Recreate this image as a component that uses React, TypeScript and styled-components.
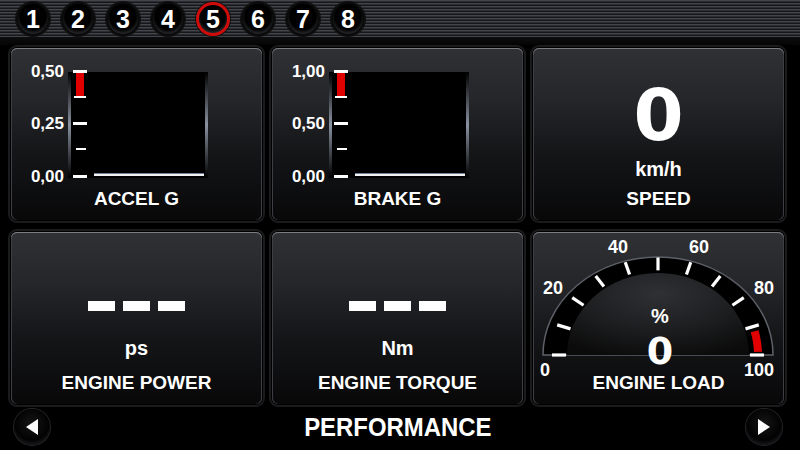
import React from "react";
import styled, { createGlobalStyle } from "styled-components";

const GlobalStyle = createGlobalStyle`
  html, body {
    margin: 0;
    padding: 0;
    background: #000;
  }
  body {
    width: 800px;
    height: 450px;
    overflow: hidden;
    font-family: "Liberation Sans", Arial, sans-serif;
    color: #fff;
  }
`;

const Screen = styled.div`
  width: 800px;
  height: 450px;
  display: flex;
  flex-direction: column;
  background: #000;
`;

const TopBar = styled.div`
  height: 45px;
  box-sizing: border-box;
  display: flex;
  align-items: flex-start;
  gap: 11px;
  padding: 2px 0 0 16px;
  background:
    linear-gradient(to bottom, transparent 0 37px, #0d0d0f 37px, #050505 45px),
    repeating-linear-gradient(to bottom, #44454b 0 1px, #2b2c31 1px 2px, #16171a 2px 3px);
`;

const PageButton = styled.div<{ $active?: boolean }>`
  width: 34px;
  height: 34px;
  box-sizing: border-box;
  border-radius: 50%;
  display: flex;
  align-items: center;
  justify-content: center;
  font-size: 25px;
  font-weight: bold;
  color: #fff;
  border: ${(p) => (p.$active ? "3px solid #d10a0a" : "2px solid #0a0a0a")};
  background: radial-gradient(circle at 50% 42%, #050505 0%, #000 56%, #2a2b2f 76%, #4d4e54 91%, #1a1a1c 100%);
  box-shadow: 0 0 0 1px #111;
`;

const Grid = styled.div`
  display: grid;
  grid-template-columns: repeat(3, 251px);
  grid-template-rows: repeat(2, 172px);
  gap: 12px 10px;
  padding: 3px 0 0 11px;
`;

const Card = styled.div`
  display: flex;
  flex-direction: column;
  align-items: center;
  border-radius: 6px;
  background: linear-gradient(180deg, #303135 0%, #25262a 30%, #151618 60%, #080809 100%);
  box-shadow:
    inset 0 1px 0 #7c7d83,
    inset 1px 0 0 #3e3f44,
    inset -1px 0 0 #3e3f44,
    0 0 0 1px #000,
    0 0 0 3px #1b1b1d;
`;

const Title = styled.div`
  margin-top: auto;
  padding-bottom: 10px;
  font-size: 19px;
  line-height: 22px;
  font-weight: bold;
  white-space: nowrap;
`;

const BigValue = styled.div`
  margin-top: 37px;
  font-family: "DejaVu Sans", sans-serif;
  font-size: 72px;
  font-weight: bold;
  line-height: 60px;
`;

const Unit = styled.div<{ $gap: number }>`
  margin-top: ${(p) => p.$gap}px;
  font-size: 20px;
  line-height: 22px;
  font-weight: bold;
`;

const Dashes = styled.div`
  margin-top: 69px;
  display: flex;
  gap: 8px;
`;

const Dash = styled.div`
  width: 27px;
  height: 10px;
  background: #fff;
`;

const ChartSvg = styled.svg`
  margin-top: 15px;
  display: block;
`;

const GaugeSvg = styled.svg`
  display: block;
  overflow: visible;
`;

const SvgLabel = styled.text<{ $size: number }>`
  font-family: "Liberation Sans", Arial, sans-serif;
  font-weight: bold;
  font-size: ${(p) => p.$size}px;
  fill: #fff;
`;

const GaugeValue = styled.text`
  font-family: "DejaVu Sans", sans-serif;
  font-weight: bold;
  font-size: 38px;
  fill: #fff;
`;

const BottomBar = styled.div`
  flex: 1;
  display: flex;
  align-items: center;
  justify-content: space-between;
  padding: 0 18px 0 14px;
`;

const ArrowButton = styled.div`
  width: 36px;
  height: 36px;
  border-radius: 50%;
  display: flex;
  align-items: center;
  justify-content: center;
  background: radial-gradient(circle at 50% 40%, #151515 0%, #020202 60%, #1e1f23 82%, #3b3d43 94%, #151517 100%);
  box-shadow: 0 0 0 1px #25262a;
`;

const PageTitle = styled.div`
  font-size: 26px;
  font-weight: bold;
  transform: scaleX(0.92);
  letter-spacing: 0;
`;

const BarChart = ({ id, labels }: { id: string; labels: string[] }) => (
  <ChartSvg width={252} height={125} viewBox="0 0 252 125">
    <defs>
      <linearGradient id={id} x1="0" y1="0" x2="0" y2="1">
        <stop offset="0" stopColor="#000" />
        <stop offset="0.5" stopColor="#8a92a0" />
        <stop offset="1" stopColor="#000" />
      </linearGradient>
    </defs>
    <rect x={57} y={9} width={140} height={106} fill="#000" />
    <rect x={57} y={9} width={3} height={106} fill={`url(#${id})`} />
    <rect x={194} y={9} width={3} height={106} fill={`url(#${id})`} />
    <SvgLabel $size={17} x={53} y={14} textAnchor="end">{labels[0]}</SvgLabel>
    <SvgLabel $size={17} x={53} y={66} textAnchor="end">{labels[1]}</SvgLabel>
    <SvgLabel $size={17} x={53} y={119} textAnchor="end">{labels[2]}</SvgLabel>
    <rect x={65} y={10} width={8} height={24} fill="#e00000" />
    <rect x={63} y={33} width={12} height={2} fill="#fff" />
    <rect x={62} y={7} width={14} height={3} fill="#fff" />
    <rect x={62} y={59} width={14} height={3} fill="#fff" />
    <rect x={65} y={85} width={10} height={2} fill="#fff" />
    <rect x={62} y={112} width={14} height={3} fill="#fff" />
    <rect x={83} y={110} width={110} height={1} fill="#6c7e98" />
    <rect x={83} y={111} width={110} height={2} fill="#f2f2f2" />
  </ChartSvg>
);

const cx = 125;
const cy = 123;
const K = 0.92;
const pt = (r: number, deg: number) => {
  const a = (deg * Math.PI) / 180;
  return [cx + r * Math.cos(a), cy - r * K * Math.sin(a)];
};

const LoadGauge = () => {
  const ticks = Array.from({ length: 11 }, (_, i) => {
    const deg = 180 - i * 18;
    const [x1, y1] = pt(92, deg);
    const [x2, y2] = pt(106, deg);
    return <line key={i} x1={x1} y1={y1} x2={x2} y2={y2} stroke="#fff" strokeWidth={3.2} />;
  });
  const outer: number[][] = [];
  const inner: number[][] = [];
  for (let d = 2; d <= 15; d += 1) {
    outer.push(pt(104, d));
    inner.unshift(pt(96, d));
  }
  const red = [...outer, ...inner].map((p) => p.join(",")).join(" ");
  return (
    <GaugeSvg width={251} height={139} viewBox="0 0 251 139">
      <defs>
        <radialGradient id="dome" cx="0.5" cy="0.25" r="0.8">
          <stop offset="0" stopColor="#2f3033" />
          <stop offset="0.55" stopColor="#1d1e20" />
          <stop offset="1" stopColor="#0b0b0b" />
        </radialGradient>
      </defs>
      <path
        d={`M ${cx - 115} ${cy} A 115 98 0 0 1 ${cx + 115} ${cy} Z`}
        fill="#000"
        stroke="#5d6068"
        strokeWidth={1.5}
      />
      <path d={`M ${cx - 91} ${cy} A 91 82 0 0 1 ${cx + 91} ${cy} Z`} fill="url(#dome)" />
      <polygon points={red} fill="#e00000" />
      {ticks}
      <SvgLabel $size={18} x={12} y={143.5} textAnchor="middle">0</SvgLabel>
      <SvgLabel $size={18} x={20} y={61.5} textAnchor="middle">20</SvgLabel>
      <SvgLabel $size={18} x={85} y={20.5} textAnchor="middle">40</SvgLabel>
      <SvgLabel $size={18} x={166} y={20.5} textAnchor="middle">60</SvgLabel>
      <SvgLabel $size={18} x={231} y={61.5} textAnchor="middle">80</SvgLabel>
      <SvgLabel $size={18} x={226} y={143.5} textAnchor="middle">100</SvgLabel>
      <SvgLabel $size={20} x={127} y={91} textAnchor="middle">%</SvgLabel>
      <GaugeValue x={127} y={132} textAnchor="middle">0</GaugeValue>
    </GaugeSvg>
  );
};

const Arrow = ({ dir }: { dir: "left" | "right" }) => (
  <svg width={16} height={18} viewBox="0 0 16 18">
    {dir === "left" ? (
      <polygon points="2,9 14,1 14,17" fill="#fff" />
    ) : (
      <polygon points="14,9 2,1 2,17" fill="#fff" />
    )}
  </svg>
);

export default function App() {
  const pages = [1, 2, 3, 4, 5, 6, 7, 8];
  return (
    <Screen>
      <GlobalStyle />
      <TopBar>
        {pages.map((n) => (
          <PageButton key={n} $active={n === 5}>
            {n}
          </PageButton>
        ))}
      </TopBar>
      <Grid>
        <Card>
          <BarChart id="bevelA" labels={["0,50", "0,25", "0,00"]} />
          <Title>ACCEL G</Title>
        </Card>
        <Card>
          <BarChart id="bevelB" labels={["1,00", "0,50", "0,00"]} />
          <Title>BRAKE G</Title>
        </Card>
        <Card>
          <BigValue>0</BigValue>
          <Unit $gap={13}>km/h</Unit>
          <Title>SPEED</Title>
        </Card>
        <Card>
          <Dashes>
            <Dash />
            <Dash />
            <Dash />
          </Dashes>
          <Unit $gap={26}>ps</Unit>
          <Title>ENGINE POWER</Title>
        </Card>
        <Card>
          <Dashes>
            <Dash />
            <Dash />
            <Dash />
          </Dashes>
          <Unit $gap={26}>Nm</Unit>
          <Title>ENGINE TORQUE</Title>
        </Card>
        <Card>
          <LoadGauge />
          <Title>ENGINE LOAD</Title>
        </Card>
      </Grid>
      <BottomBar>
        <ArrowButton>
          <Arrow dir="left" />
        </ArrowButton>
        <PageTitle>PERFORMANCE</PageTitle>
        <ArrowButton>
          <Arrow dir="right" />
        </ArrowButton>
      </BottomBar>
    </Screen>
  );
}
